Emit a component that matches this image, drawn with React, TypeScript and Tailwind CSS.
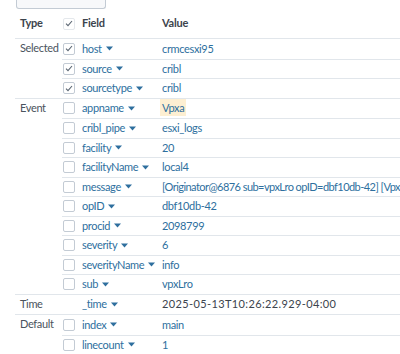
import React from "react";

type Row = { field: string; value: string; checked?: boolean; noBox?: boolean; plain?: boolean; hl?: boolean; tight?: boolean };
type Group = { type: string; rows: Row[] };

const groups: Group[] = [
  {
    type: "Selected",
    rows: [
      { field: "host", value: "crmcesxi95", checked: true },
      { field: "source", value: "cribl", checked: true },
      { field: "sourcetype", value: "cribl", checked: true },
    ],
  },
  {
    type: "Event",
    rows: [
      { field: "appname", value: "Vpxa", hl: true },
      { field: "cribl_pipe", value: "esxi_logs" },
      { field: "facility", value: "20" },
      { field: "facilityName", value: "local4" },
      {
        field: "message",
        value: "[Originator@6876 sub=vpxLro opID=dbf10db-42] [VpxLroList::ForgetTask] Unregistering vim.Task",
        tight: true,
      },
      { field: "opID", value: "dbf10db-42" },
      { field: "procid", value: "2098799" },
      { field: "severity", value: "6" },
      { field: "severityName", value: "info" },
      { field: "sub", value: "vpxLro" },
    ],
  },
  {
    type: "Time",
    rows: [{ field: "_time", value: "2025-05-13T10:26:22.929-04:00", noBox: true, plain: true }],
  },
  {
    type: "Default",
    rows: [
      { field: "index", value: "main" },
      { field: "linecount", value: "1" },
    ],
  },
];

function Caret() {
  return (
    <svg width="7" height="5" viewBox="0 0 7 5" className="ml-[4px] shrink-0">
      <path d="M0 0.5h7L3.5 4.5z" fill="#2e6f9e" />
    </svg>
  );
}

function Check() {
  return (
    <svg width="8" height="7" viewBox="0 0 8 7">
      <path d="M1 3.6l2 2L7 1" fill="none" stroke="#5c6773" strokeWidth="1.1" />
    </svg>
  );
}

function Box({ checked, faint }: { checked?: boolean; faint?: boolean }) {
  return (
    <div
      className={`w-[12px] h-[12px] rounded-[2px] border bg-white flex items-center justify-center ${
        faint ? "border-[#e4e8ec]" : "border-[#c3cbd4]"
      }`}
    >
      {checked && <Check />}
    </div>
  );
}

export default function App() {
  return (
    <div
      className="w-[400px] h-[354px] overflow-hidden bg-white text-[11px] tracking-[-0.35px] text-[#3c444d]"
      style={{ fontFamily: "Lato, 'Open Sans', sans-serif" }}
    >
      <div className="ml-[16px] w-[90px] h-[9px] border border-t-0 border-[#c3cbd4] rounded-b-[3px] bg-[#f7f8fa]" />
      <div className="ml-[15px]">
        <div className="flex items-center h-[29px] font-bold tracking-[-0.2px]">
          <div className="w-[47px] pl-[5px]">Type</div>
          <div className="w-[16px] pl-[1px]">
            <Box checked faint />
          </div>
          <div className="w-[80px] pl-[4px]">Field</div>
          <div className="pl-[4px]">Value</div>
        </div>
        {groups.map((g) => (
          <div key={g.type} className="flex border-t border-[#e1e6eb]">
            <div className="w-[47px] shrink-0 pl-[5px] h-[18.5px] flex items-center text-[#4a535d]">{g.type}</div>
            <div className="flex-1 min-w-0">
              {g.rows.map((r, i) => (
                <div key={r.field} className={`flex items-center h-[19.5px] ${i > 0 ? "border-t border-[#e1e6eb]" : ""}`}>
                  <div className="w-[16px] shrink-0 pl-[1px]">{!r.noBox && <Box checked={r.checked} />}</div>
                  <div className="w-[80px] shrink-0 pl-[4px] flex items-center text-[#2e6f9e]">
                    <span>{r.field}</span>
                    <Caret />
                  </div>
                  <div
                    className={`pl-[4px] whitespace-nowrap ${
                      r.plain ? "text-[#3c444d] tracking-[0.37px]" : "text-[#2e6f9e]"
                    } ${r.tight ? "tracking-[-0.55px]" : ""}`}
                  >
                    {r.hl ? <span className="bg-[#fdefd2] px-[2px] py-[2px] -ml-[2px]">{r.value}</span> : r.value}
                  </div>
                </div>
              ))}
            </div>
          </div>
        ))}
      </div>
    </div>
  );
}
